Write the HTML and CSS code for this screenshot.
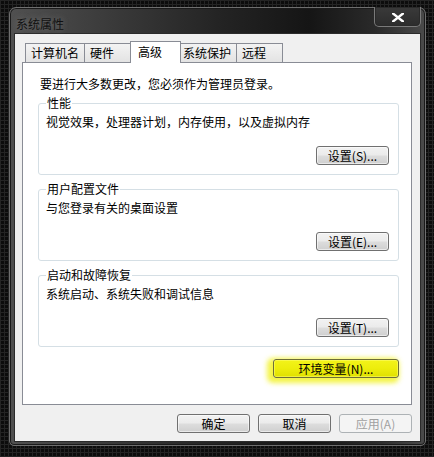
FILE: index.html
```html
<!DOCTYPE html>
<html lang="zh-CN">
<head>
<meta charset="utf-8">
<title>系统属性</title>
<link rel="stylesheet" href="styles.css">
</head>
<body>
<div class="window">
  <div class="titlebar">
    <span class="title">系统属性</span>
    <span class="close">
      <svg width="12" height="9" viewBox="0 0 12 9"><path d="M1 0.5 L11 8.5 M11 0.5 L1 8.5" stroke="#fff" stroke-width="2.4" stroke-linecap="square"/></svg>
    </span>
  </div>
  <div class="client">
    <div class="tabs">
      <span class="tab">计算机名</span>
      <span class="tab">硬件</span>
      <span class="tab active">高级</span>
      <span class="tab">系统保护</span>
      <span class="tab">远程</span>
    </div>
    <div class="panel">
      <p class="intro">要进行大多数更改，您必须作为管理员登录。</p>
      <fieldset class="group">
        <legend>性能</legend>
        <p class="desc">视觉效果，处理器计划，内存使用，以及虚拟内存</p>
        <div class="row-end"><button class="btn">设置(S)...</button></div>
      </fieldset>
      <fieldset class="group">
        <legend>用户配置文件</legend>
        <p class="desc">与您登录有关的桌面设置</p>
        <div class="row-end"><button class="btn">设置(E)...</button></div>
      </fieldset>
      <fieldset class="group">
        <legend>启动和故障恢复</legend>
        <p class="desc">系统启动、系统失败和调试信息</p>
        <div class="row-end"><button class="btn">设置(T)...</button></div>
      </fieldset>
      <div class="row-end env-row"><button class="btn env">环境变量(N)...</button></div>
    </div>
    <div class="footer">
      <button class="btn">确定</button>
      <button class="btn">取消</button>
      <button class="btn" disabled>应用(A)</button>
    </div>
  </div>
</div>
</body>
</html>
```

FILE: styles.css
```css
* { box-sizing: border-box; }
html, body { margin: 0; padding: 0; }
body {
  width: 434px;
  height: 457px;
  overflow: hidden;
  background-color: #0c0c0c;
  background-image:
    linear-gradient(#242424 1px, transparent 1px),
    linear-gradient(90deg, #242424 1px, transparent 1px);
  background-size: 4px 4px;
  font-family: "Noto Sans CJK SC", "Noto Sans", sans-serif;
  font-size: 12px;
  color: #000;
}
.window {
  margin: 7px 0 0 9px;
  width: 417px;
  height: 439px;
  border: 1px solid #6e6e6e;
  border-radius: 7px 7px 5px 5px;
  padding: 0 5px 4px 5px;
  background: linear-gradient(90deg, #505050 0%, #3e3e3e 20%, #242424 50%, #151515 72%, #2a2a2a 88%, #4a4a4a 100%);
  box-shadow: inset 0 0 0 1px #1a1a1a;
}
.titlebar {
  height: 26px;
  display: flex;
  align-items: center;
  justify-content: space-between;
}
.title {
  padding-left: 1px;
  color: #111;
  font-size: 12px;
  text-shadow: 0 0 6px rgba(200,200,200,0.35);
  margin-top: 5px;
}
.close {
  align-self: flex-start;
  margin-top: -1px;
  margin-right: -1px;
  width: 47px;
  height: 20px;
  border: 1px solid #7a7a7a;
  border-top: none;
  border-radius: 0 0 5px 5px;
  box-shadow: inset 0 0 0 1px #2a2a2a;
  background: linear-gradient(#3a3a3a, #2c2c2c);
  display: flex;
  align-items: center;
  justify-content: center;
  padding-top: 1px;
}
.client {
  height: 407px;
  background: #f0f0f0;
  padding: 7px 8px 0 7px;
  box-shadow: 0 0 0 1px #2b2b2b;
}
.tabs {
  display: flex;
  align-items: flex-end;
  height: 21px;
  padding-left: 3px;
}
.tab {
  height: 19px;
  min-width: 47px;
  padding: 0 5px 0 5px;
  border: 1px solid #898c95;
  border-bottom: none;
  border-right: none;
  background: linear-gradient(#f3f3f3, #e3e3e3);
  line-height: 17px;
  color: #000;
}
.tab:nth-child(2) { min-width: 48px; }
.tab:nth-child(5) { border-right: 1px solid #898c95; }
.tab.active {
  z-index: 1;
  height: 22px;
  min-width: 51px;
  margin: 0 -2px -1px -2px;
  padding-left: 7px;
  border-right: 1px solid #898c95;
  background: #fff;
  line-height: 19px;
}
.tab.active + .tab { border-left: none; padding-left: 4px; }
.panel {
  height: 343px;
  border: 1px solid #898c95;
  background: #fff;
  padding: 13px 12px 0 15px;
}
.intro {
  margin: 0 0 4px 2px;
  line-height: 16px;
}
.group {
  margin: 0 0 7px 0;
  padding: 4px 9px 9px 7px;
  border: 1px solid #d5dfe5;
  border-radius: 3px;
  min-width: 0;
}
.group legend {
  padding: 0 1px;
  line-height: 14px;
  color: #000;
}
.desc {
  margin: 0;
  line-height: 16px;
}
.row-end {
  display: flex;
  justify-content: flex-end;
  margin-top: 16px;
}
.env-row { margin-top: 12px; }
.btn {
  width: 73px;
  height: 19px;
  padding: 0;
  font-family: "Noto Sans CJK SC", "Noto Sans", sans-serif;
  font-size: 12px;
  line-height: 16px;
  color: #000;
  border: 1px solid #707070;
  border-radius: 3px;
  background: linear-gradient(#f2f2f2 0%, #ebebeb 48%, #dddddd 52%, #cfcfcf 100%);
  box-shadow: inset 0 0 0 1px rgba(255,255,255,0.55);
}
.btn.env {
  width: 126px;
  border-color: #6d6d38;
  background: linear-gradient(#f3f31a 0%, #eded0c 50%, #e0e000 100%);
  box-shadow: inset 0 0 0 1px rgba(255,255,120,0.5), -3px 2px 5px 3px rgba(242,242,40,0.85);
}
.btn:disabled {
  color: #a0a0a0;
  border-color: #adb2b5;
  background: #f4f4f4;
  box-shadow: none;
}
.footer {
  display: flex;
  justify-content: flex-end;
  gap: 8px;
  margin-top: 9px;
}
```
